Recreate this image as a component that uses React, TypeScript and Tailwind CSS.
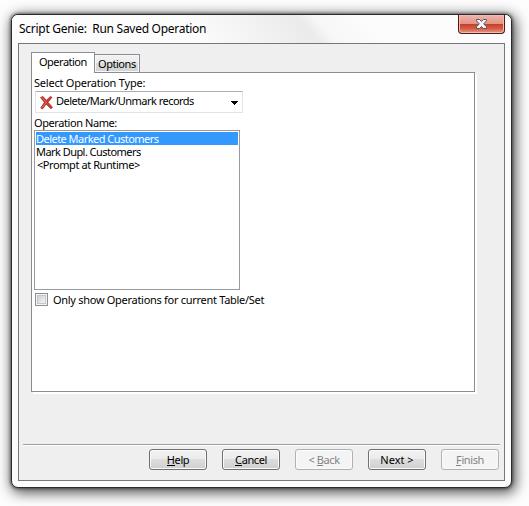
import type { ReactNode } from "react";

function ListRow({ children, selected = false, className = "" }: { children: ReactNode; selected?: boolean; className?: string }) {
  return (
    <li className={`h-[13px] leading-[13px] ${selected ? "bg-[#3399ff] text-white" : ""} ${className}`}>
      {children}
    </li>
  );
}

function DialogButton({ children, disabled = false, className = "" }: { children: ReactNode; disabled?: boolean; className?: string }) {
  return (
    <button
      disabled={disabled}
      className={`flex h-[21px] w-[58px] items-center justify-center rounded-[3px] border leading-[13px] ${
        disabled
          ? "border-[#adb2b5] bg-[#f4f4f4] text-[#838383] shadow-[inset_0_0_0_1px_#fbfbfb]"
          : "border-[#707070] bg-[linear-gradient(#f2f2f2_0%,#ebebeb_48%,#dddddd_50%,#cfcfcf_100%)] text-black shadow-[inset_0_0_0_1px_#fafafa]"
      } ${className}`}
    >
      <span>{children}</span>
    </button>
  );
}

function Key({ children }: { children: ReactNode }) {
  return <span className="inline-block h-[13px] border-b border-current leading-[13px]">{children}</span>;
}

function CloseButton() {
  return (
    <button
      aria-label="Close"
      className="mr-[6px] flex h-[19px] w-[47px] justify-center rounded-b-[4px] border border-t-0 border-[#4c1a18] bg-[linear-gradient(#f0b4ab_0%,#e39488_48%,#c73d25_50%,#d45c45_75%,#e99a86_100%)] pt-[3px] shadow-[inset_0_0_0_1px_#f3bdb3]"
    >
      <svg width="13" height="12" viewBox="0 0 13 12">
        <path d="M1.5 1.5h3.2l1.8 2 1.8-2h3.2v1.3L8.7 5.8l2.8 3v1.7H8.3l-1.8-2-1.8 2H1.5V8.8l2.8-3-2.8-3z" fill="#f5f5f5" stroke="#50586b" strokeWidth="1" />
      </svg>
    </button>
  );
}

export default function App() {
  return (
    <div className="h-[506px] w-[529px] overflow-hidden bg-[#fdfdfd] pl-[11px] pt-[14px] font-['Noto_Sans','Open_Sans',sans-serif] text-[11px] text-black">
      <div className="flex h-[474px] w-[501px] flex-col rounded-[7px] border border-[#2b2b2d] bg-[#fbfbfb] shadow-[0_0_3px_1px_rgba(0,0,0,0.45),2px_3px_13px_2px_rgba(0,0,0,0.65)]">
        <header className="flex h-7 justify-between rounded-t-[6px] bg-[linear-gradient(50deg,#fcfcfc_0%,#fcfcfc_36%,#ebebeb_58%,#ebebeb_59%,#f7f7f7_62%,#fcfcfc_72%)]">
          <h1 className="whitespace-pre pl-[7px] pt-[6px] text-[12px] leading-4 tracking-[-0.28px]">Script Genie:  Run Saved Operation</h1>
          <CloseButton />
        </header>

        <main className="mx-[6px] flex h-[438px] flex-col border border-[#76777b] bg-[#efefef] pt-2">
          <div className="ml-3 flex h-5 items-end">
            <div className="h-5 w-[64px] border border-b-0 border-[#898c95] bg-white pl-[7px] pt-[2px] leading-[13px] tracking-[-0.5px]">Operation</div>
            <div className="h-[18px] w-[45px] border border-b-0 border-l-0 border-[#898c95] bg-[linear-gradient(#f2f2f2_0%,#ebebeb_48%,#dddddd_50%,#d2d2d2_100%)] pl-[3px] pt-[2px] leading-[13px] tracking-[-0.45px] shadow-[inset_0_0_0_1px_#f7f7f7]">Options</div>
          </div>

          <section className="ml-3 h-[320px] w-[444px] border border-t-0 border-[#898c95] bg-white shadow-[2px_2px_0_#fff]">
            <div className="flex">
              <div className="h-px w-[62px]" />
              <div className="h-px flex-1 bg-[#898c95]" />
            </div>
            <div className="pl-[2px] pt-[4px]">
              <p className="h-[14px] leading-[12px] tracking-[-0.22px]">Select Operation Type:</p>
              <div className="ml-px flex h-[22px] w-[208px] items-center border border-[#dfe3ec] border-t-[#abadb3] pl-[4px]">
                <svg width="13" height="15" viewBox="0 0 13 15">
                  <path d="M0.5 2.5L3 1.5l3.3 3.8L10.5 1.5l1.5.8L8 7.3l4.5 5-1.5 1.5-4.8-4.6L2.5 14l-1.8-1L4.4 7.4z" fill="#c83b30" stroke="#a41f1c" strokeWidth=".7" />
                  <path d="M2 2.6l4.3 4.8L2 12.8" fill="none" stroke="#e08277" strokeWidth=".7" />
                </svg>
                <span className="ml-[3px] flex-1 pb-[3px] leading-[13px] tracking-[-0.53px]">Delete/Mark/Unmark records</span>
                <svg className="mr-[4px] mt-[2px]" width="7" height="4" viewBox="0 0 7 4" shapeRendering="crispEdges">
                  <path d="M0 0h7v1H6v1H5v1H4v1H3V3H2V2H1V1H0z" />
                </svg>
              </div>
              <p className="mt-1 h-[13px] leading-[12px] tracking-[-0.42px]">Operation Name:</p>
              <ul className="h-[160px] w-[206px] border border-[#999a9c] p-px">
                <ListRow selected className="tracking-[-0.53px]">Delete Marked Customers</ListRow>
                <ListRow className="tracking-[-0.55px]">Mark Dupl. Customers</ListRow>
                <ListRow className="pl-px tracking-[-0.42px]">&lt;Prompt at Runtime&gt;</ListRow>
              </ul>
              <label className="ml-px mt-[3px] flex h-[13px]">
                <span className="h-[13px] w-[13px] border border-[#8e8f8f] bg-[#f4f4f4] p-px">
                  <span className="block h-[9px] w-[9px] border border-[#c4c8cc] bg-[linear-gradient(135deg,#cbcfd5,#f6f6f6)]" />
                </span>
                <span className="ml-[5px] leading-[14px] tracking-[-0.29px]">Only show Operations for current Table/Set</span>
              </label>
            </div>
          </section>

          <footer className="mx-1 mt-[52px] h-9 border-t border-[#a0a0a0] shadow-[inset_0_1px_0_#fff]">
            <div className="ml-[126px] mt-1 flex gap-[15px] tracking-[-0.4px]">
              <DialogButton><Key>H</Key>elp</DialogButton>
              <DialogButton><Key>C</Key>ancel</DialogButton>
              <DialogButton disabled>&lt; <Key>B</Key>ack</DialogButton>
              <DialogButton className="tracking-[0px]">Next &gt;</DialogButton>
              <DialogButton disabled><Key>F</Key>inish</DialogButton>
            </div>
          </footer>
        </main>
      </div>
    </div>
  );
}
